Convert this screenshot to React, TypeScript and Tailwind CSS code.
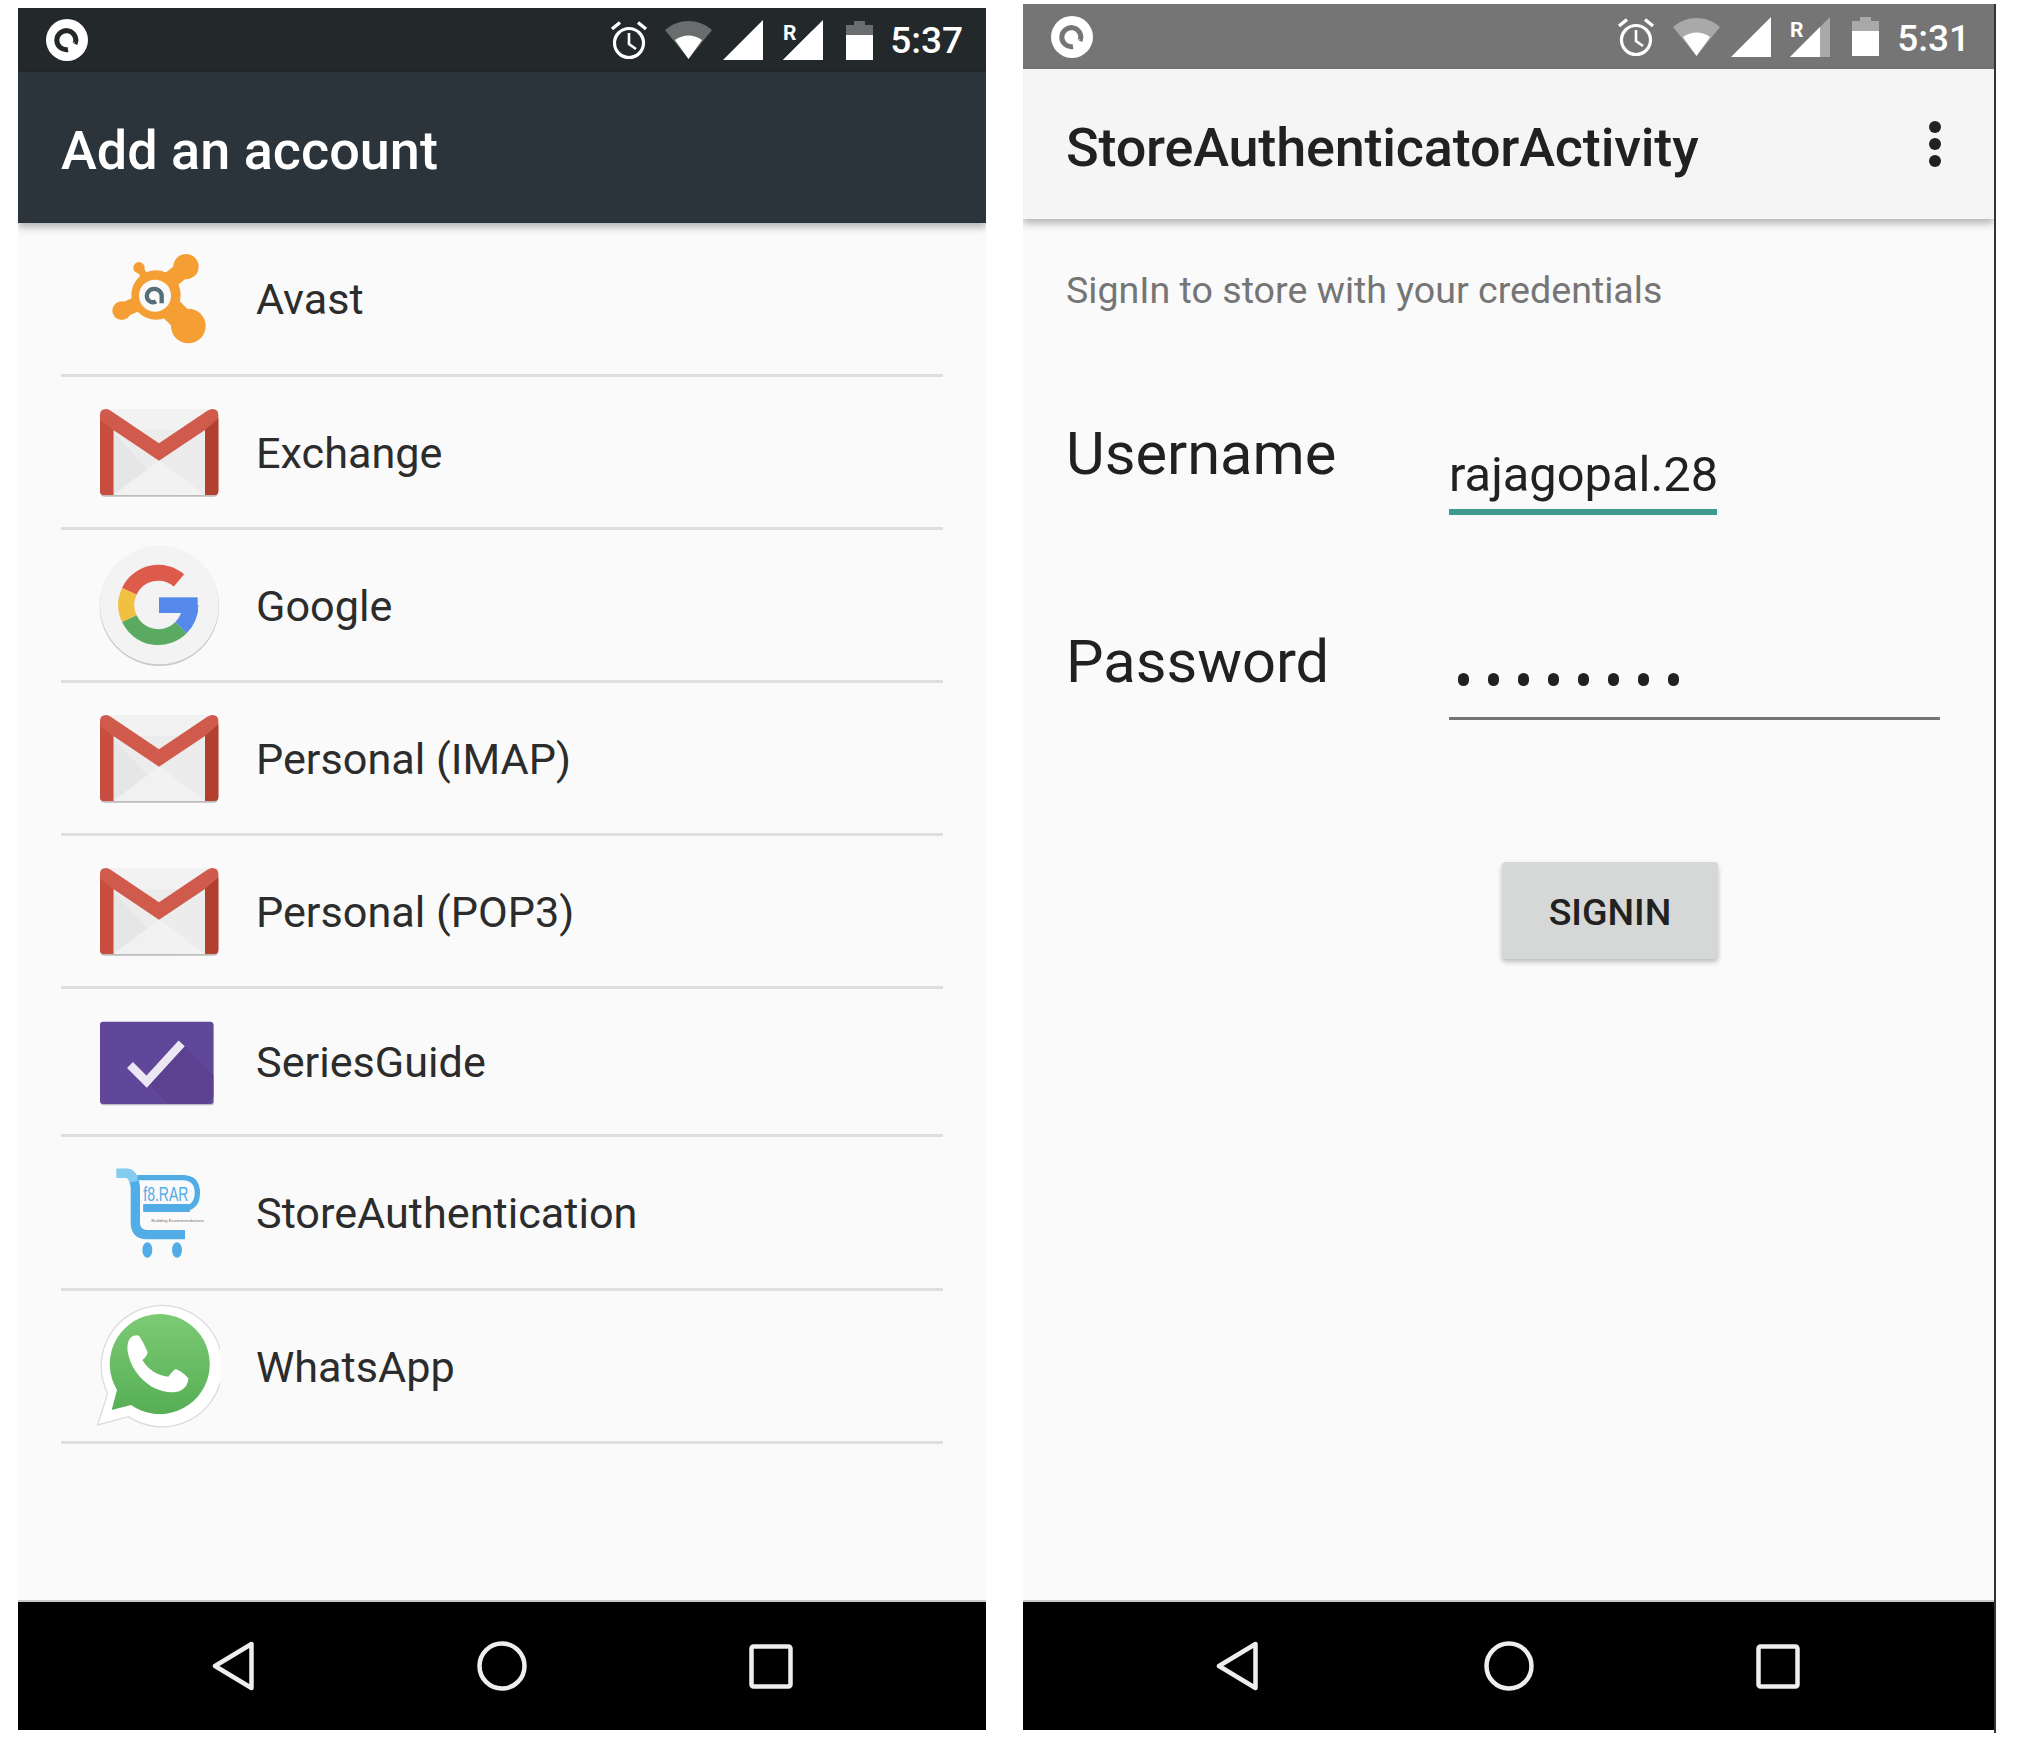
import React from "react";

const Logo = ({ fg }: { fg: string }) => (
  <svg width="44" height="44" viewBox="0 0 44 44">
    <circle cx="22" cy="22" r="21" fill="#fff" />
    <path d="M30 26A9.5 9.5 0 1 0 23 31.5" fill="none" stroke={fg} strokeWidth="5" />
    <path d="M29.5 24L24 30" fill="none" stroke="#fff" strokeWidth="1" />
  </svg>
);

const Clock = () => (
  <svg width="38" height="40" viewBox="0 0 38 40" fill="none" stroke="#fff" strokeWidth="3.2">
    <circle cx="19" cy="23" r="14.5" />
    <path d="M19 13V24L26 29" strokeWidth="2.6" />
    <path d="M2 9L10 2.5M36 9L28 2.5" strokeWidth="3.4" />
  </svg>
);

const Wifi = ({ dim }: { dim: string }) => (
  <svg width="47" height="38" viewBox="0 0 47 38">
    <path d="M0 9C14 -3 33 -3 47 9L23.5 38Z" fill={dim} />
    <path d="M10 19C18 13 29 13 37 19L23.5 38Z" fill="#fff" />
  </svg>
);

const Signal = () => (
  <svg width="40" height="40" viewBox="0 0 40 40"><path d="M40 0V40H0Z" fill="#fff" /></svg>
);

const SignalR = ({ dim }: { dim: string }) => (
  <svg width="40" height="40" viewBox="0 0 40 40">
    <path d="M40 0V40H0Z" fill={dim} />
    <path d="M30 10V40H0Z" fill="#fff" />
    <text x="0" y="20" fill="#fff" fontSize="21" fontWeight="700" fontFamily="Roboto,sans-serif">R</text>
  </svg>
);

const Battery = ({ dim }: { dim: string }) => (
  <svg width="27" height="39" viewBox="0 0 27 39">
    <path d="M8 0H19V4H27V39H0V4H8Z" fill="#fff" />
    <path d="M8 0H19V4H27V14H0V4H8Z" fill={dim} />
  </svg>
);

const Avast = () => (
  <svg width="130" height="130" viewBox="0 0 390 390">
    <g transform="translate(-120,-12)" fill="#f49e34" stroke="#f49e34" strokeLinecap="round">
      <path d="M325 200L415 288" strokeWidth="70" fill="none" />
      <path d="M325 180L400 118" strokeWidth="52" fill="none" />
      <path d="M300 205L215 242" strokeWidth="44" fill="none" />
      <path d="M305 170L267 113" strokeWidth="22" fill="none" />
      <circle cx="318" cy="195" r="74" stroke="none" />
      <circle cx="415" cy="288" r="52" stroke="none" />
      <circle cx="408" cy="110" r="38" stroke="none" />
      <circle cx="215" cy="242" r="28" stroke="none" />
      <circle cx="267" cy="113" r="17" stroke="none" />
      <circle cx="315" cy="197" r="48" fill="#fafafa" stroke="none" />
      <path d="M335 220V196C333 180 318 174 304 178C292 183 288 196 292 206C296 216 308 220 318 214" fill="none" stroke="#546e7a" strokeWidth="13" strokeLinecap="butt" />
    </g>
  </svg>
);

const Gmail = () => (
  <svg width="130" height="130" viewBox="0 0 390 390">
    <g transform="translate(-120,-471)">
      <rect x="152" y="542" width="351" height="258" rx="10" fill="#bdbdbd" />
      <rect x="150" y="537" width="355" height="258" rx="12" fill="#f2f2f2" />
      <path d="M190 600L465 600V795H190Z" fill="#ececec" />
      <path d="M190 795L327 690L465 795Z" fill="#f2f2f2" />
      <path d="M190 608L365 795H190Z" fill="#e6e6e6" />
      <path d="M190 795L297 713L365 795Z" fill="#f1f1f1" />
      <path d="M150 555Q150 537 168 537Q175 537 182 542L327 640L472 542Q480 537 487 537Q505 537 505 555V783Q505 795 493 795H465V600L327 692L190 600V795H162Q150 795 150 783Z" fill="#d05a4c" />
      <path d="M150 570L190 600V795H162Q150 795 150 783Z" fill="#c64d3f" />
      <path d="M465 600L505 565V783Q505 795 493 795H465Z" fill="#b2402f" />
    </g>
  </svg>
);

const Google = () => (
  <svg width="130" height="130" viewBox="0 0 390 390">
    <circle cx="208" cy="199" r="179" fill="#c9c9c9" />
    <circle cx="208" cy="195" r="178" fill="#f3f3f3" />
    <g fill="none" strokeWidth="48">
      <path d="M267 121A96 96 0 0 0 118 154" stroke="#dc5b4b" />
      <path d="M118 154A96 96 0 0 0 118 236" stroke="#f2c041" />
      <path d="M118 236A96 96 0 0 0 273 263" stroke="#5aaa62" />
      <path d="M273 263A96 96 0 0 0 301 195" stroke="#5589ec" />
    </g>
    <rect x="207" y="172" width="116" height="47" fill="#5589ec" />
  </svg>
);

const Series = () => (
  <svg width="130" height="130" viewBox="0 0 390 390">
    <rect x="32" y="78" width="340" height="247" rx="9" fill="#bdb8c6" />
    <rect x="30" y="74" width="340" height="247" rx="9" fill="#604799" />
    <path d="M170 254L275 139L370 235V300L350 321H237Z" fill="#5b4190" />
    <path d="M120 204L170 254L275 139" fill="none" stroke="#ece8f3" strokeWidth="25" />
  </svg>
);

const Cart = () => (
  <svg width="130" height="130" viewBox="0 0 390 390">
    <g transform="translate(-120,-444)" fill="none">
      <path d="M200 520H232Q250 522 256 560V670Q258 704 290 704H405" stroke="#52ace6" strokeWidth="28" />
      <path d="M200 520H232Q246 521 252 545" stroke="#83cdf0" strokeWidth="28" />
      <path d="M262 533H400Q442 535 442 578Q442 624 400 624H280" stroke="#52ace6" strokeWidth="16" />
      <rect x="280" y="612" width="140" height="24" fill="#52ace6" />
      <text x="280" y="603" fill="#52ace6" fontSize="60" fontFamily="'Liberation Sans',sans-serif" textLength="135" lengthAdjust="spacingAndGlyphs">f8.RAR</text>
      <text x="304" y="666" fill="#777" fontSize="12" fontFamily="'Liberation Sans',sans-serif" textLength="158" lengthAdjust="spacingAndGlyphs">Building Ecommendations</text>
      <ellipse cx="292" cy="750" rx="15" ry="23" fill="#52ace6" />
      <ellipse cx="381" cy="750" rx="15" ry="23" fill="#52ace6" />
    </g>
  </svg>
);

const Whats = () => (
  <svg width="130" height="130" viewBox="0 0 390 390">
    <defs>
      <linearGradient id="wa" x1="0" y1="0" x2="0" y2="1">
        <stop offset="0" stopColor="#7ccb74" />
        <stop offset="1" stopColor="#56ae55" />
      </linearGradient>
    </defs>
    <g transform="translate(-125,-908)">
      <path d="M148 1280L178 1185A182 182 0 1 1 240 1255Z" fill="#fff" stroke="#dcdcdc" strokeWidth="4" />
      <path d="M190 1235L206 1175A150 150 0 1 1 248 1220Z" fill="url(#wa)" />
      <path d="M245 1020Q255 1008 272 1012Q285 1030 298 1062Q296 1075 282 1085Q310 1130 360 1135Q372 1118 382 1112Q405 1122 420 1140Q420 1165 395 1178Q360 1190 310 1165Q250 1125 238 1060Q235 1035 245 1020Z" fill="#fff" />
    </g>
  </svg>
);

const NavBack = () => (
  <svg width="42" height="50" viewBox="0 0 42 50">
    <path d="M39.5 3V47L3 25Z" fill="none" stroke="#eee" strokeWidth="4.5" strokeLinejoin="round" />
  </svg>
);
const NavHome = () => (
  <svg width="50" height="50" viewBox="0 0 50 50">
    <circle cx="25" cy="25" r="22.5" fill="none" stroke="#eee" strokeWidth="4.5" />
  </svg>
);
const NavSquare = () => (
  <svg width="44" height="45" viewBox="0 0 44 45">
    <rect x="2.5" y="2.5" width="39" height="40" rx="2" fill="none" stroke="#eee" strokeWidth="4.5" />
  </svg>
);

const Nav = ({ cls, home, square }: { cls: string; home: string; square: string }) => (
  <div className={`bg-black h-[130px] shrink-0 flex items-center border-t-2 border-[#c8c8c8] ${cls}`}>
    <NavBack />
    <div className={home}><NavHome /></div>
    <div className={square}><NavSquare /></div>
  </div>
);

const rows = [
  { name: "Avast", icon: <Avast />, h: "h-[154px]" },
  { name: "Exchange", icon: <Gmail />, h: "h-[153px]" },
  { name: "Google", icon: <Google />, h: "h-[153px]" },
  { name: "Personal (IMAP)", icon: <Gmail />, h: "h-[153px]" },
  { name: "Personal (POP3)", icon: <Gmail />, h: "h-[153px]" },
  { name: "SeriesGuide", icon: <Series />, h: "h-[148px]" },
  { name: "StoreAuthentication", icon: <Cart />, h: "h-[154px]" },
  { name: "WhatsApp", icon: <Whats />, h: "h-[153px]" },
];

export default function App() {
  return (
    <div className="w-[2018px] h-[1744px] bg-white flex font-['Roboto',sans-serif] overflow-hidden">
      <div className="ml-[18px] mt-[8px] w-[968px] h-[1722px] flex flex-col bg-[#fafafa] overflow-hidden">
        <div className="h-[64px] shrink-0 bg-[#23282a] flex items-center pl-[27px] pr-[23px] text-white">
          <Logo fg="#23282a" />
          <div className="ml-auto"><Clock /></div>
          <div className="ml-[17px]"><Wifi dim="#6a6d6e" /></div>
          <div className="ml-[11px]"><Signal /></div>
          <div className="ml-[20px]"><SignalR dim="#fff" /></div>
          <div className="ml-[23px]"><Battery dim="#6a6d6e" /></div>
          <span className="ml-[17px] text-[37px] font-medium leading-none">5:37</span>
        </div>
        <div className="h-[151px] shrink-0 bg-[#2b343a] flex items-center pl-[43px] pt-[7px] shadow-[0_4px_8px_rgba(0,0,0,0.3)] relative">
          <span className="text-white text-[54px] font-medium leading-none">Add an account</span>
        </div>
        <div className="flex-1 ml-[43px] w-[882px]">
          {rows.map((r) => (
            <div key={r.name} className={`${r.h} border-b-[3px] border-[#dedede] flex items-center`}>
              <div className="ml-[29px] w-[130px] shrink-0">{r.icon}</div>
              <span className="ml-[36px] pt-[3px] text-[43.2px] leading-none text-[#2c2c2c]">{r.name}</span>
            </div>
          ))}
        </div>
        <Nav cls="pl-[194px]" home="ml-[223px]" square="ml-[222px]" />
      </div>

      <div className="ml-[37px] mt-[4px] w-[973px] h-[1729px] border-r-2 border-[#333]">
        <div className="h-[1726px] flex flex-col bg-[#fafafa] overflow-hidden">
          <div className="h-[65px] shrink-0 bg-[#757575] flex items-center pl-[27px] pr-[24px] text-white">
            <Logo fg="#757575" />
            <div className="ml-auto"><Clock /></div>
            <div className="ml-[18px]"><Wifi dim="#a9a9a9" /></div>
            <div className="ml-[11px]"><Signal /></div>
            <div className="ml-[19px]"><SignalR dim="#a9a9a9" /></div>
            <div className="ml-[22px]"><Battery dim="#a9a9a9" /></div>
            <span className="ml-[18px] pt-[3px] text-[37px] font-medium leading-none">5:31</span>
          </div>
          <div className="h-[150px] shrink-0 bg-[#f5f5f5] flex items-center pl-[43px] pr-[53px] justify-between shadow-[0_4px_8px_rgba(0,0,0,0.3)] relative">
            <span className="pt-[7px] text-[#212121] text-[54px] font-medium leading-none tracking-[-0.2px]">StoreAuthenticatorActivity</span>
            <div className="flex flex-col gap-[5px]">
              <span className="w-[12px] h-[12px] rounded-full bg-[#212121]" />
              <span className="w-[12px] h-[12px] rounded-full bg-[#212121]" />
              <span className="w-[12px] h-[12px] rounded-full bg-[#212121]" />
            </div>
          </div>
          <div className="flex-1 pl-[43px]">
            <div className="mt-[50px] text-[37.6px] leading-[42px] text-[#757575]">SignIn to store with your credentials</div>
            <div className="mt-[109px] flex">
              <span className="w-[383px] text-[59.6px] leading-[68px] text-[#212121]">Username</span>
              <div className="mt-[23px]">
                <div className="text-[48.8px] leading-[64px] text-[#212121] h-[66px]">rajagopal.28</div>
                <div className="w-[268px] h-[6px] bg-[#409a8c]" />
              </div>
            </div>
            <div className="mt-[113px] flex">
              <span className="w-[383px] text-[59.6px] leading-[68px] text-[#212121]">Password</span>
              <div className="w-[491px]">
                <div className="h-[66px] flex items-center gap-[19px] pl-[9px] pt-[36px]">
                  {[0, 1, 2, 3, 4, 5, 6, 7].map((i) => (
                    <span key={i} className="w-[11px] h-[13px] rounded-full bg-[#212121]" />
                  ))}
                </div>
                <div className="mt-[23px] h-[3px] bg-[#757575]" />
              </div>
            </div>
            <button className="block ml-[436px] mt-[142px] w-[216px] h-[97px] pt-[4px] rounded-[4px] bg-[#d6d7d7] shadow-[0_3px_5px_rgba(0,0,0,0.25)] text-[37.5px] font-medium text-[#212121]">SIGNIN</button>
          </div>
          <Nav cls="pl-[193px]" home="ml-[226px]" square="ml-[222px]" />
        </div>
      </div>
    </div>
  );
}
